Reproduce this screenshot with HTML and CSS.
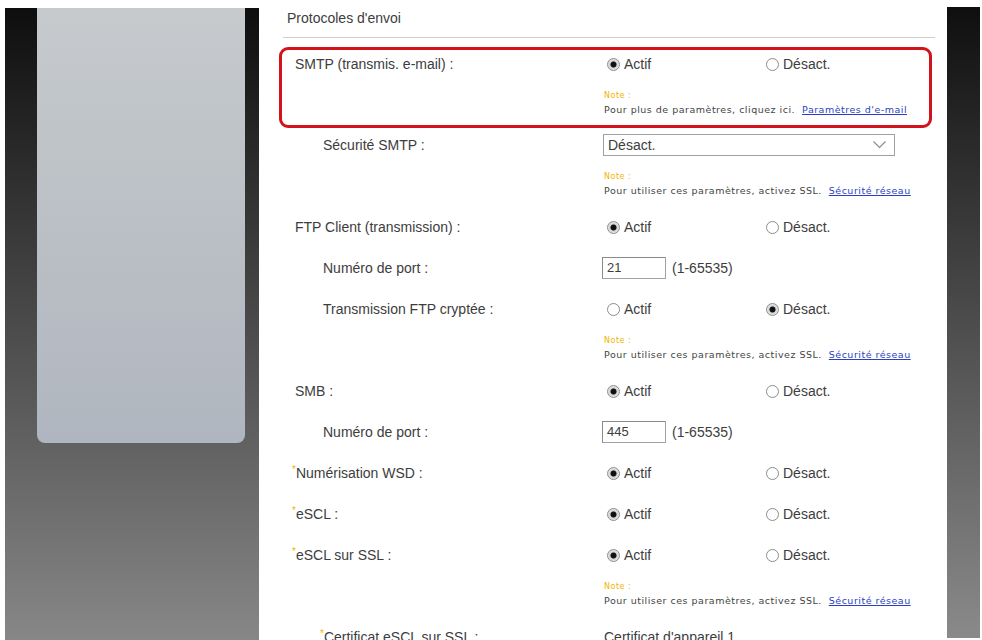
FILE: index.html
```html
<!DOCTYPE html>
<html lang="fr">
<head>
  <meta charset="UTF-8" />
  <title>Protocoles d'envoi</title>
  <link rel="stylesheet" href="styles.css">
</head>
<body>
  <div class="page">
    <!-- colonne de gauche (menu) -->
    <aside class="side">
      <div class="side-panel"></div>
    </aside>

    <main class="form">
      <div class="section-title">Protocoles d'envoi</div>

      <!-- ligne mise en evidence -->
      <div class="highlight">
        <div class="row noted">
          <div class="label">SMTP (transmis. e-mail) :</div>
          <div class="value">
            <div class="opts">
              <span class="opt"><span class="radio on"></span>Actif</span>
              <span class="opt"><span class="radio"></span>Désact.</span>
            </div>
            <div class="note">
              <div class="note-head">Note :</div>
              <div>Pour plus de paramètres, cliquez ici.<a href="#">Paramètres d'e-mail</a></div>
            </div>
          </div>
        </div>
      </div>

      <div class="row noted">
        <div class="label sub">Sécurité SMTP :</div>
        <div class="value">
          <div class="select">
            <span>Désact.</span>
            <svg width="13" height="8" viewBox="0 0 13 8"><polyline points="0.5,0.5 6.5,6.5 12.5,0.5" fill="none" stroke="#8a8a8a" stroke-width="1.1"/></svg>
          </div>
          <div class="note">
            <div class="note-head">Note :</div>
            <div>Pour utiliser ces paramètres, activez SSL.<a href="#">Sécurité réseau</a></div>
          </div>
        </div>
      </div>

      <div class="row">
        <div class="label">FTP Client (transmission) :</div>
        <div class="value opts">
          <span class="opt"><span class="radio on"></span>Actif</span>
          <span class="opt"><span class="radio"></span>Désact.</span>
        </div>
      </div>

      <div class="row">
        <div class="label sub">Numéro de port :</div>
        <div class="value"><span class="field">21</span><span class="range">(1-65535)</span></div>
      </div>

      <div class="row noted">
        <div class="label sub">Transmission FTP cryptée :</div>
        <div class="value">
          <div class="opts">
            <span class="opt"><span class="radio"></span>Actif</span>
            <span class="opt"><span class="radio on"></span>Désact.</span>
          </div>
          <div class="note">
            <div class="note-head">Note :</div>
            <div>Pour utiliser ces paramètres, activez SSL.<a href="#">Sécurité réseau</a></div>
          </div>
        </div>
      </div>

      <div class="row">
        <div class="label">SMB :</div>
        <div class="value opts">
          <span class="opt"><span class="radio on"></span>Actif</span>
          <span class="opt"><span class="radio"></span>Désact.</span>
        </div>
      </div>

      <div class="row">
        <div class="label sub">Numéro de port :</div>
        <div class="value"><span class="field">445</span><span class="range">(1-65535)</span></div>
      </div>

      <div class="row">
        <div class="label"><span class="req">*</span>Numérisation WSD :</div>
        <div class="value opts">
          <span class="opt"><span class="radio on"></span>Actif</span>
          <span class="opt"><span class="radio"></span>Désact.</span>
        </div>
      </div>

      <div class="row">
        <div class="label"><span class="req">*</span>eSCL :</div>
        <div class="value opts">
          <span class="opt"><span class="radio on"></span>Actif</span>
          <span class="opt"><span class="radio"></span>Désact.</span>
        </div>
      </div>

      <div class="row noted">
        <div class="label"><span class="req">*</span>eSCL sur SSL :</div>
        <div class="value">
          <div class="opts">
            <span class="opt"><span class="radio on"></span>Actif</span>
            <span class="opt"><span class="radio"></span>Désact.</span>
          </div>
          <div class="note">
            <div class="note-head">Note :</div>
            <div>Pour utiliser ces paramètres, activez SSL.<a href="#">Sécurité réseau</a></div>
          </div>
        </div>
      </div>

      <div class="row">
        <div class="label sub"><span class="req">*</span>Certificat eSCL sur SSL :</div>
        <div class="value">Certificat d'appareil 1</div>
      </div>
    </main>

    <div class="side-right"></div>
  </div>
</body>
</html>
```

FILE: styles.css
```css
body {
  margin: 0;
  background: #fff;
  font-family: "Liberation Sans", Arial, sans-serif;
  color: #3d3d3d;
  height: 640px;
  overflow: hidden;
}

.page {
  display: flex;
  height: 640px;
}

/* colonnes sombres */
.side {
  margin: 8px 0 0 5px;
  width: 254px;
  padding-left: 32px;
  box-sizing: border-box;
  background: linear-gradient(#0e0e0e, #878787);
}

.side-panel {
  width: 208px;
  height: 435px;
  border-radius: 0 0 8px 8px;
  background: linear-gradient(#c6cacd, #b0b6bf);
}

.side-right {
  margin: 7px 0 2px 12px;
  width: 33px;
  background: linear-gradient(#0f0f0f, #8a8a8a);
}

/* formulaire */
.form {
  margin-left: 24px;
  width: 652px;
}

.section-title {
  padding: 9px 0 10px 4px;
  line-height: 18px;
  font-size: 14px;
  border-bottom: 1px solid #cfcfcf;
}

.highlight {
  margin: 9px 3px -3px -4px;
  border: 3px solid #d3121c;
  border-radius: 9px;
}

.row {
  display: grid;
  grid-template-columns: 321px 1fr;
  padding: 11px 0 12px;
  line-height: 18px;
  font-size: 14px;
}

.row.noted {
  padding-bottom: 9px;
}

.highlight .row {
  grid-template-columns: 322px 1fr;
  padding: 5px 0 8px;
}

.label {
  padding-left: 12px;
}

.highlight .label {
  padding-left: 13px;
}

.label.sub {
  padding-left: 40px;
}

.req {
  color: #f0b400;
  font-size: 10px;
  vertical-align: top;
  line-height: 12px;
  margin-left: -3px;
}

.opts {
  display: flex;
}

.opt {
  display: flex;
  align-items: center;
  width: 159px;
}

.radio {
  width: 11px;
  height: 11px;
  margin: 0 4px 0 3px;
  border: 1px solid #8c8c8c;
  border-radius: 50%;
  background: #fff;
}

.radio.on {
  background: radial-gradient(circle, #111 0 2.6px, #cfcfcf 3.4px, #ededed 6px);
}

.field {
  display: inline-block;
  box-sizing: border-box;
  width: 64px;
  height: 22px;
  margin: -2px 0 -2px -2px;
  padding-left: 4px;
  vertical-align: top;
  line-height: 20px;
  font-size: 13px;
  border: 1px solid #a3a3a3;
  border-top-color: #8a8a8a;
  border-left-color: #8a8a8a;
}

.range {
  margin-left: 6px;
}

.select {
  display: flex;
  justify-content: space-between;
  align-items: center;
  box-sizing: border-box;
  width: 292px;
  height: 22px;
  margin: -2px 0 -2px -1px;
  padding: 0 8px 0 4px;
  border: 1px solid #a0a0a0;
}

/* petites notes */
.note {
  margin-top: 16px;
  font-family: "DejaVu Sans", sans-serif;
  font-size: 9.5px;
  letter-spacing: 0.5px;
  line-height: 14px;
  color: #444;
}

.note-head {
  color: #f2b300;
  font-size: 8px;
}

.note a {
  margin-left: 7px;
  color: #2b3fc4;
  text-decoration: underline;
}
```
